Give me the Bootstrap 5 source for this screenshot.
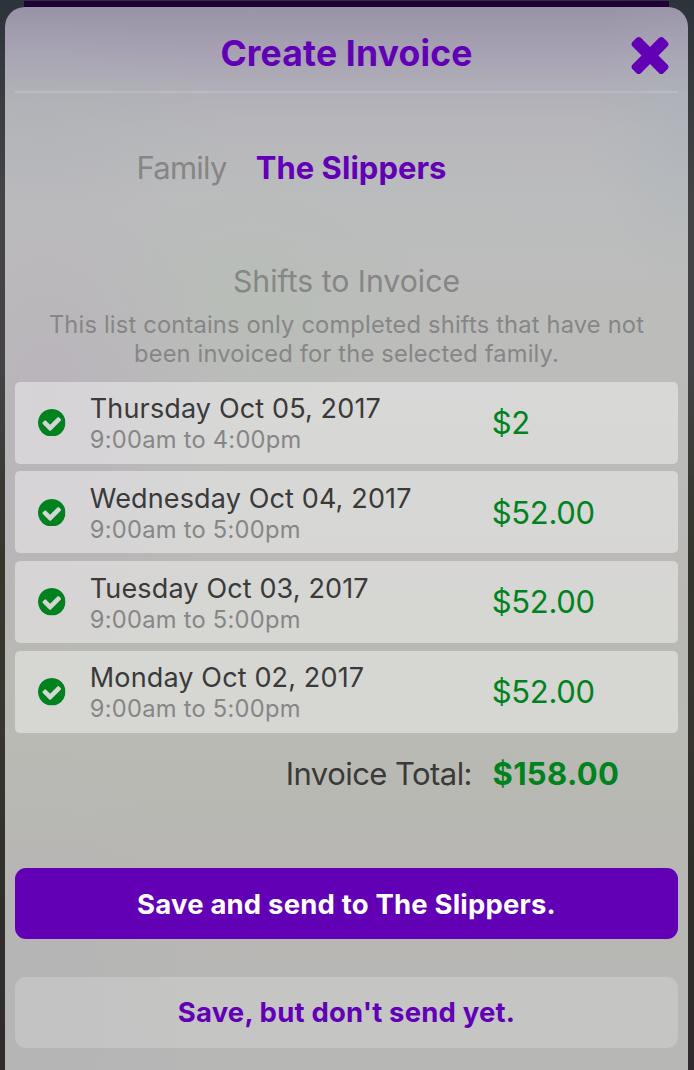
<!DOCTYPE html>
<html lang="en">
<head>
<meta charset="utf-8">
<meta name="viewport" content="width=device-width, initial-scale=1">
<title>Create Invoice</title>
<link href="https://cdn.jsdelivr.net/npm/bootstrap@5.3.0/dist/css/bootstrap.min.css" rel="stylesheet">
<style>
:root { --brand: #6200b6; --money: #00831e; --muted: #868686; --ink: #3a3a3a; }
html, body { height: 100%; }
body { font-family: Inter, "Liberation Sans", sans-serif; color: var(--ink); overflow: hidden;
  background: linear-gradient(#2d333b 0, #35393d 60px, #444446 200px, #434346 370px, #3a3a35 480px, #35372c 560px, #383530 740px, #30302b 860px, #302b2e 1070px); }
.page-strip { height: 6px; margin: 1px 25px 0 24px; background: #200038; }
.sheet { margin: 0 6px 0 5px; height: 1063px; padding: 0 10px; border-radius: 20px 20px 0 0;
  background:
    radial-gradient(190px 280px at 40px 390px, rgba(182,172,188,.5), transparent),
    radial-gradient(170px 120px at 245px 290px, rgba(178,190,178,.4), transparent),
    radial-gradient(100px 160px at 683px 120px, rgba(168,178,186,.45), transparent),
    radial-gradient(200px 100px at 30px 110px, rgba(172,178,180,.45), transparent),
    radial-gradient(180px 260px at 30px 1000px, rgba(178,178,182,.5), transparent),
    linear-gradient(#9993a7 0, #a7a1b3 45px, #b1b0b8 85px, #b7b7bb 120px, #bbbcbd 190px, #bcbdbb 300px, #bbbbb9 460px, #b9b8b4 600px, #b9bab4 730px, #b8b7b3 850px, #b7b7b6 1063px); }
.sheet-head { height: 86px; border-bottom: 2px solid rgba(255,255,255,.13); }
.sheet-title { font-size: 35.5px; line-height: 48px; font-weight: 700; letter-spacing: .18px; color: var(--brand); padding-top: 2px; }
.close-x { right: 9px; top: 29px; line-height: 0; }
.field-row { height: 40px; font-size: 31px; line-height: 40px; margin-top: 55px; padding-left: 121.5px; gap: 29px; }
.fam-label { letter-spacing: -.75px; }
.fam-name { letter-spacing: .03px; }
.muted-txt { color: var(--muted); }
.brand-txt { color: var(--brand); }
.section-title { font-size: 30.2px; line-height: 40px; margin-top: 73px; }
.section-note { font-size: 23.7px; line-height: 28.8px; letter-spacing: .17px; margin-top: 10px; }
.shifts { gap: 7.8px; margin-top: 13px; }
.shift { height: 82px; border-radius: 5px; background: rgba(255,255,255,.42); padding-left: 23px; }
.shift-when { width: 402px; margin-left: 24.3px; padding-top: 2.8px; }
.shift-day { font-size: 27px; line-height: 31px; letter-spacing: .14px; }
.shift-time { font-size: 23.7px; line-height: 31px; letter-spacing: .25px; }
.amount { font-size: 31px; line-height: 40px; color: var(--money); letter-spacing: -.35px; padding-top: .6px; }
.total-row { font-size: 31px; line-height: 40px; margin-top: 21px; }
.total-label { width: 457px; margin-right: 20.5px; letter-spacing: -.55px; }
.total-amount { letter-spacing: .35px; padding-top: 0; }
.action { height: 70.7px; border-radius: 11px; border: 0; font-size: 27.5px; font-weight: 700; letter-spacing: .18px; padding: 1px 0 0; }
.action-send, .action-send:hover { background: var(--brand); color: #fff; margin-top: 74.5px; }
.action-hold, .action-hold:hover { background: rgba(255,255,255,.2); color: var(--brand); margin-top: 38px; }
</style>
</head>
<body>
<div class="d-flow-root overflow-hidden h-100">
  <div class="page-strip"></div>
  <main class="sheet">
    <header class="sheet-head position-relative d-flex justify-content-center align-items-center pt-2">
      <h1 class="sheet-title m-0">Create Invoice</h1>
      <button class="close-x btn p-0 border-0 position-absolute" type="button" aria-label="Close">
        <svg width="38" height="38" viewBox="302 334 1188 1220" fill="#6200b6"><path d="M1490 1322q0 40-28 68l-136 136q-28 28-68 28t-68-28l-294-294-294 294q-28 28-68 28t-68-28l-136-136q-28-28-28-68t28-68l294-294-294-294q-28-28-28-68t28-68l136-136q28-28 68-28t68 28l294 294 294-294q28-28 68-28t68 28l136 136q28 28 28 68t-28 68l-294 294 294 294q28 28 28 68z"/></svg>
      </button>
    </header>

    <div class="field-row d-flex">
      <span class="muted-txt fam-label">Family</span>
      <span class="brand-txt fw-bold fam-name">The Slippers</span>
    </div>

    <h2 class="section-title muted-txt text-center fw-normal mb-0">Shifts to Invoice</h2>
    <p class="section-note muted-txt text-center mb-0">This list contains only completed shifts that have not<br>been invoiced for the selected family.</p>

    <svg class="d-none"><symbol id="check" viewBox="128 128 1536 1536"><path d="M1412 734q0-28-18-46l-91-90q-19-19-45-19t-45 19l-408 407-226-226q-19-19-45-19t-45 19l-91 90q-18 18-18 46 0 27 18 45l362 362q19 19 45 19 27 0 46-19l543-543q18-18 18-45zm252 162q0 209-103 385.5t-279.5 279.5-385.5 103-385.5-103-279.5-279.5-103-385.5 103-385.5 279.5-279.5 385.5-103 385.5 103 279.5 279.5 103 385.5z"/></symbol></svg>

    <div class="shifts d-flex flex-column">
      <div class="shift d-flex align-items-center">
        <svg width="27.5" height="27.5" fill="#00831e"><use href="#check"/></svg>
        <div class="shift-when"><div class="shift-day">Thursday Oct 05, 2017</div><div class="shift-time muted-txt">9:00am to 4:00pm</div></div>
        <div class="amount">$2</div>
      </div>
      <div class="shift d-flex align-items-center">
        <svg width="27.5" height="27.5" fill="#00831e"><use href="#check"/></svg>
        <div class="shift-when"><div class="shift-day">Wednesday Oct 04, 2017</div><div class="shift-time muted-txt">9:00am to 5:00pm</div></div>
        <div class="amount">$52.00</div>
      </div>
      <div class="shift d-flex align-items-center">
        <svg width="27.5" height="27.5" fill="#00831e"><use href="#check"/></svg>
        <div class="shift-when"><div class="shift-day">Tuesday Oct 03, 2017</div><div class="shift-time muted-txt">9:00am to 5:00pm</div></div>
        <div class="amount">$52.00</div>
      </div>
      <div class="shift d-flex align-items-center">
        <svg width="27.5" height="27.5" fill="#00831e"><use href="#check"/></svg>
        <div class="shift-when"><div class="shift-day">Monday Oct 02, 2017</div><div class="shift-time muted-txt">9:00am to 5:00pm</div></div>
        <div class="amount">$52.00</div>
      </div>
    </div>

    <div class="total-row d-flex">
      <div class="total-label text-end">Invoice Total:</div>
      <div class="amount fw-bold total-amount">$158.00</div>
    </div>

    <button class="action action-send btn d-block w-100" type="button">Save and send to The Slippers.</button>
    <button class="action action-hold btn d-block w-100" type="button">Save, but don't send yet.</button>
  </main>
</div>
<script src="https://cdn.jsdelivr.net/npm/bootstrap@5.3.0/dist/js/bootstrap.bundle.min.js"></script>
</body>
</html>
